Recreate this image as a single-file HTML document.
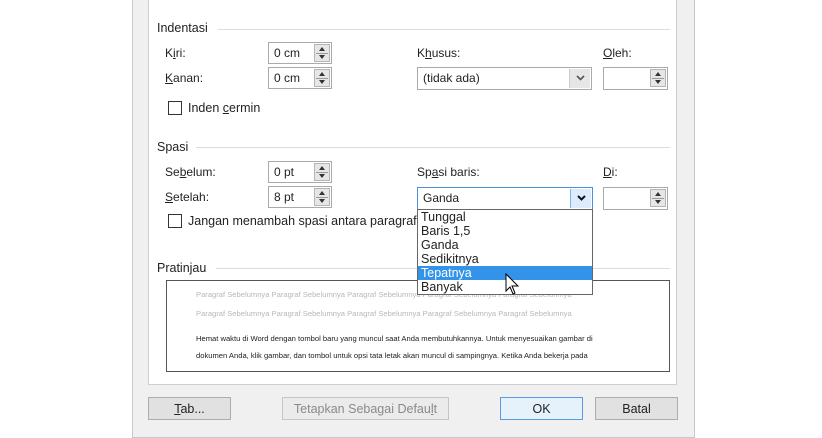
<!DOCTYPE html>
<html><head><meta charset="utf-8"><style>
*{margin:0;padding:0;box-sizing:border-box}
body{width:822px;height:430px;background:#fff;position:relative;overflow:hidden;font-family:"Liberation Sans","DejaVu Sans",sans-serif;font-size:12px;color:#222}
.a{position:absolute;white-space:nowrap}
.dlg{position:absolute;left:132px;top:-2px;width:563px;height:440px;background:#f0f0f0;border:1px solid #c8c8c8}
.panel{position:absolute;left:148px;top:-2px;width:529px;height:387px;background:#fff;border:1px solid #cfcfcf}
.line{position:absolute;height:1px;background:#dcdcdc}
.in{position:absolute;background:#fff;border:1px solid #aaa;height:22px;padding:3px 0 0 5px}
.sp{position:absolute;right:1px;top:1px;width:16px;height:18px;background:#e6e6e6;border:1px solid #b5b5b5}
.sp:before{content:"";position:absolute;left:4px;top:2px;border:3px solid transparent;border-bottom:4px solid #333;border-top:0}
.sp:after{content:"";position:absolute;left:4px;top:10px;border:3px solid transparent;border-top:4px solid #333;border-bottom:0}
.sp i{position:absolute;left:1px;right:1px;top:8px;height:1px;background:#999}
.cb{position:absolute;width:14px;height:14px;border:1px solid #333;background:#fff}
.btn{position:absolute;top:397px;height:23px;background:#e1e1e1;border:1px solid #adadad;text-align:center;padding-top:4px;font-size:12.5px}
u{text-decoration:underline}
.pv{position:absolute;left:196px;font-size:7.6px;white-space:nowrap}
.chev{position:absolute;left:6px;top:6px}
</style></head><body>
<div class="dlg"></div>
<div class="panel"></div>

<div class="a" style="left:157px;top:21px;font-size:12.5px">Indentasi</div>
<div class="line" style="left:218px;top:29px;width:452px"></div>
<div class="a" style="left:165px;top:46px">K<u>i</u>ri:</div>
<div class="a" style="left:165px;top:71px"><u>K</u>anan:</div>
<div class="in" style="left:268px;top:42px;width:64px">0 cm<div class="sp"><i></i></div></div>
<div class="in" style="left:268px;top:67px;width:64px">0 cm<div class="sp"><i></i></div></div>
<div class="a" style="left:417px;top:46px">K<u>h</u>usus:</div>
<div class="in" style="left:417px;top:67px;width:175px;height:23px">(tidak ada)<div style="position:absolute;right:1px;top:1px;width:21px;height:19px;background:#e6e6e6;border-left:1px solid #ccc"><svg class="chev" width="9" height="6" viewBox="0 0 9 6"><path d="M1 1 L4.5 4.5 L8 1" fill="none" stroke="#555" stroke-width="1.6"/></svg></div></div>
<div class="a" style="left:603px;top:46px"><u>O</u>leh:</div>
<div class="in" style="left:603px;top:67px;width:65px;height:23px"><div class="sp"><i></i></div></div>
<div class="cb" style="left:168px;top:101px"></div>
<div class="a" style="left:188px;top:101px;font-size:12.5px">Inden <u>c</u>ermin</div>

<div class="a" style="left:157px;top:140px;font-size:12.5px">Spasi</div>
<div class="line" style="left:196px;top:147px;width:474px"></div>
<div class="a" style="left:165px;top:165px">Se<u>b</u>elum:</div>
<div class="a" style="left:165px;top:190px"><u>S</u>etelah:</div>
<div class="in" style="left:268px;top:161px;width:64px">0 pt<div class="sp"><i></i></div></div>
<div class="in" style="left:268px;top:186px;width:64px">8 pt<div class="sp"><i></i></div></div>
<div class="a" style="left:417px;top:165px">Sp<u>a</u>si baris:</div>
<div class="in" style="left:417px;top:187px;width:176px;height:23px;border-color:#4a90d9">Ganda<div style="position:absolute;right:1px;top:1px;width:21px;height:19px;background:#dcecfc;border-left:1px solid #7eb4ea"><svg class="chev" width="9" height="6" viewBox="0 0 9 6"><path d="M1 1 L4.5 4.5 L8 1" fill="none" stroke="#111" stroke-width="2"/></svg></div></div>
<div class="a" style="left:603px;top:165px"><u>D</u>i:</div>
<div class="in" style="left:603px;top:187px;width:65px;height:23px"><div class="sp"><i></i></div></div>
<div class="cb" style="left:168px;top:214px"></div>
<div class="a" style="left:188px;top:214px;font-size:12.5px">Jangan menambah spasi antara paragraf</div>

<div class="a" style="left:157px;top:261px;font-size:12.5px">Pratinjau</div>
<div class="line" style="left:216px;top:268px;width:454px"></div>
<div style="position:absolute;left:166px;top:280px;width:504px;height:92px;border:1px solid #555;background:#fff"></div>
<div class="pv" style="top:290px;color:#b8b8b8">Paragraf Sebelumnya Paragraf Sebelumnya Paragraf Sebelumnya Paragraf Sebelumnya Paragraf Sebelumnya</div>
<div class="pv" style="top:309px;color:#b8b8b8">Paragraf Sebelumnya Paragraf Sebelumnya Paragraf Sebelumnya Paragraf Sebelumnya Paragraf Sebelumnya</div>
<div class="pv" style="top:334px;color:#222">Hemat waktu di Word dengan tombol baru yang muncul saat Anda membutuhkannya. Untuk menyesuaikan gambar di</div>
<div class="pv" style="top:351px;color:#222">dokumen Anda, klik gambar, dan tombol untuk opsi tata letak akan muncul di sampingnya. Ketika Anda bekerja pada</div>

<div style="position:absolute;left:417px;top:209px;width:176px;height:86px;background:#fff;border:1px solid #666;font-size:12.5px;line-height:14px">
<div style="padding-left:3px">Tunggal</div>
<div style="padding-left:3px">Baris 1,5</div>
<div style="padding-left:3px">Ganda</div>
<div style="padding-left:3px">Sedikitnya</div>
<div style="padding-left:3px;background:#3393e8;color:#fff">Tepatnya</div>
<div style="padding-left:3px">Banyak</div>
</div>
<svg class="a" style="left:505px;top:273px" width="16" height="24" viewBox="0 0 16 24"><path d="M1 1 L1 18 L5 14 L8 21 L10 20 L7 13 L13 13 Z" fill="#fff" stroke="#000" stroke-width="1"/></svg>

<div class="btn" style="left:148px;width:83px"><u>T</u>ab...</div>
<div class="btn" style="left:282px;width:167px;color:#8a8a8a;background:#ebebeb;border-color:#c5c5c5">Tetapkan Sebagai Defau<u>l</u>t</div>
<div class="btn" style="left:500px;width:83px;border-color:#5a9be0;background:#e5f1fb">OK</div>
<div class="btn" style="left:595px;width:83px">Batal</div>
</body></html>
